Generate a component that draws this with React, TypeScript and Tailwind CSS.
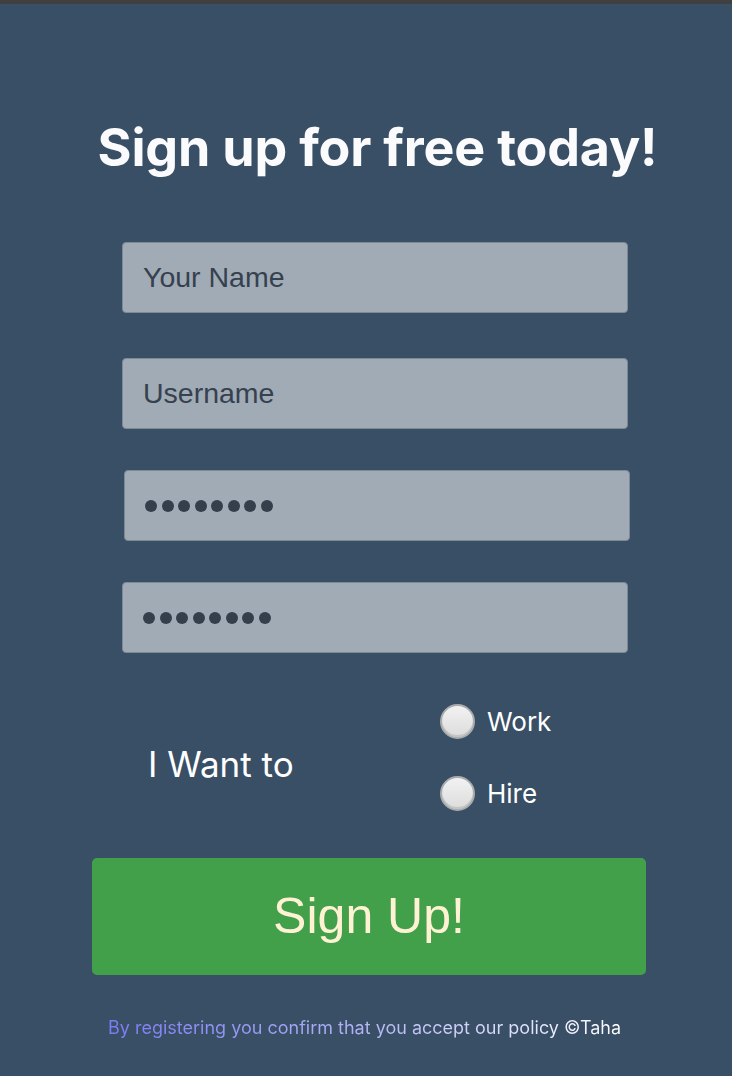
import React from "react";

const inter = { fontFamily: "Inter, 'Noto Sans', sans-serif" };

function PasswordDots() {
  return (
    <div className="flex items-center gap-[4.5px]">
      {Array.from({ length: 8 }).map((_, i) => (
        <span key={i} className="block w-[12px] h-[12px] rounded-full bg-[#343f4c]" />
      ))}
    </div>
  );
}

function Radio({ label }: { label: string }) {
  return (
    <label className="flex items-center gap-[12px] cursor-pointer">
      <span className="block w-[35px] h-[35px] rounded-full border-[2px] border-[#a9abad] bg-gradient-to-b from-[#f2f2f2] to-[#dcdcdc] shadow-[inset_0_-2px_0_#c4c4c4]" />
      <span className="text-[26px] text-white leading-none" style={inter}>
        {label}
      </span>
    </label>
  );
}

export default function App() {
  const inputBox =
    "w-[506px] h-[71px] rounded-[4px] border-[1.5px] border-[#7c8997] bg-[#a0abb6] px-[20px] flex items-center";

  return (
    <div className="min-h-screen bg-[#384f66] flex flex-col">
      {/* window top edge */}
      <div className="h-[4px] bg-[#404040]" />

      {/* Header */}
      <h1
        className="mt-[118px] pl-[23px] text-center text-[52px] font-bold leading-none text-[#fbfbfd] tracking-[-0.2px]"
        style={inter}
      >
        Sign up for free today!
      </h1>

      {/* Fields */}
      <div className="mt-[68px] ml-[122px] flex flex-col" style={{ fontFamily: "'Liberation Sans', Arial, sans-serif" }}>
        <div className={inputBox}>
          <input
            className="w-full bg-transparent outline-none text-[28.5px] text-[#36414f] placeholder:text-[#36414f]"
            placeholder="Your Name"
          />
        </div>
        <div className={inputBox + " mt-[45px]"}>
          <input
            className="w-full bg-transparent outline-none text-[28.5px] text-[#36414f] placeholder:text-[#36414f]"
            placeholder="Username"
          />
        </div>
        <div className={inputBox + " mt-[41px] ml-[2px]"}>
          <PasswordDots />
        </div>
        <div className={inputBox + " mt-[41px]"}>
          <PasswordDots />
        </div>
      </div>

      {/* I want to */}
      <div className="mt-[51px] ml-[148px] flex items-center">
        <span className="w-[292px] mt-[13px] text-[35px] text-white leading-none" style={inter}>
          I Want to
        </span>
        <div className="flex flex-col gap-[37px]">
          <Radio label="Work" />
          <Radio label="Hire" />
        </div>
      </div>

      {/* Button */}
      <button
        className="mt-[47px] ml-[92px] w-[554px] h-[117px] rounded-[5px] bg-[#42a04a] text-[50px] text-[#fff2d4] cursor-pointer"
        style={{ fontFamily: "'Liberation Sans', Arial, sans-serif" }}
      >
        Sign Up!
      </button>

      {/* Footer */}
      <p className="mt-[44px] ml-[108px] text-[18px] leading-none" style={inter}>
        <span className="bg-gradient-to-r from-[#7b7bf2] via-[#b4b4f4] to-white bg-clip-text text-transparent">
          By registering you confirm that you accept our policy ©Taha
        </span>
      </p>
    </div>
  );
}
